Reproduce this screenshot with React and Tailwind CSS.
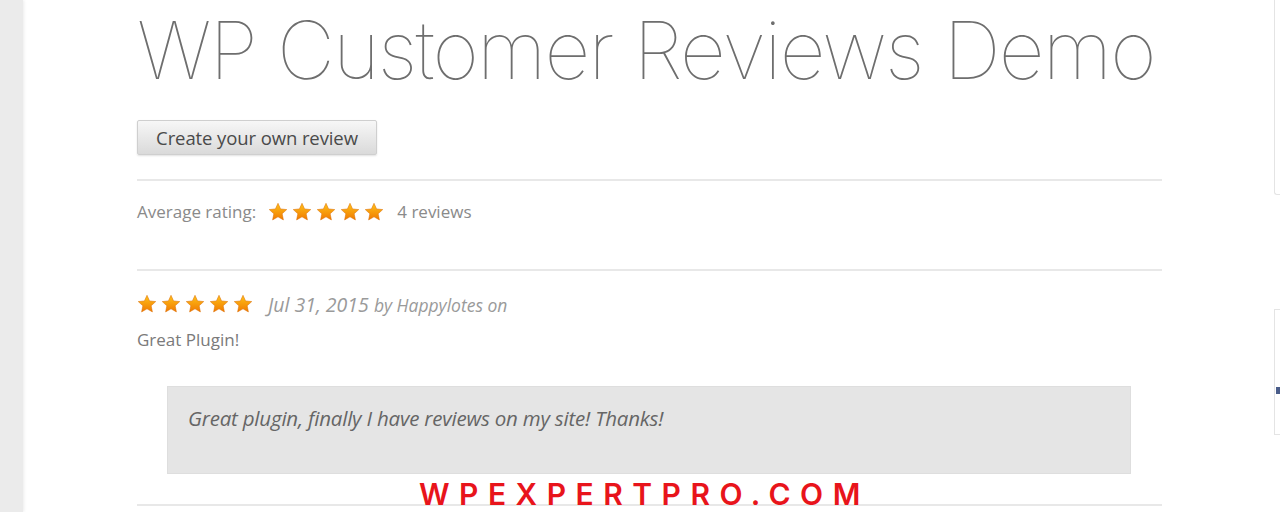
const Star = ({ size = 20 }) => (
  <svg width={size} height={size} viewBox="0 0 24 24">
    <defs>
      <linearGradient id="sg" x1="0" y1="0" x2="0" y2="1">
        <stop offset="0" stopColor="#ffc21a" />
        <stop offset="1" stopColor="#f07a00" />
      </linearGradient>
    </defs>
    <polygon
      points="12,1.5 15.1,8.3 22.5,9.1 17,14.1 18.5,21.5 12,17.8 5.5,21.5 7,14.1 1.5,9.1 8.9,8.3"
      fill="url(#sg)"
      stroke="#d96a00"
      strokeWidth="0.6"
    />
  </svg>
);

const Stars = () => (
  <div className="flex gap-[4px]">
    {[0, 1, 2, 3, 4].map((i) => (
      <Star key={i} />
    ))}
  </div>
);

const App = () => {
  return (
    <div className="relative flex h-[512px] w-[1280px] overflow-hidden bg-white font-['Open_Sans',sans-serif]">
      <div className="w-[23px] shrink-0 bg-[#ebebeb] shadow-[1px_0_3px_rgba(0,0,0,0.08)]" />
      <div className="w-[114px] shrink-0" />
      <div className="flex w-[1025px] flex-col">
        <h1 className="mt-0 h-[100px] whitespace-nowrap font-['Inter',sans-serif] text-[80px] font-thin leading-[100px] tracking-[-1.8px] text-[#6e6e6e]">
          WP Customer Reviews Demo
        </h1>
        <div className="mt-[20px]">
          <button className="h-[35px] w-[240px] rounded-[2px] border border-[#cfcfcf] bg-gradient-to-b from-[#f7f7f7] to-[#dadada] text-[18.5px] tracking-[-0.1px] text-[#4a4a4a] shadow-[0_1px_2px_rgba(0,0,0,0.12)]">
            Create your own review
          </button>
        </div>
        <div className="mt-[24px] h-[2px] bg-[#e8e8e8]" />
        <div className="mt-[18px] flex items-center text-[17px] text-[#8a8a8a]">
          <span className="mr-[12px]">Average rating:</span>
          <Stars />
          <span className="ml-[13px]">4 reviews</span>
        </div>
        <div className="mt-[44px] h-[2px] bg-[#e8e8e8]" />
        <div className="mt-[19px] flex items-center">
          <Stars />
          <span className="ml-[15px] text-[19.5px] italic text-[#9a9a9a]">
            Jul 31, 2015 <span className="text-[17.5px]">by Happylotes on</span>
          </span>
        </div>
        <div className="mt-[8px] text-[17px] text-[#7a7a7a]">Great Plugin!</div>
        <div className="ml-[30px] mt-[34px] h-[88px] w-[964px] border border-[#dedede] bg-[#e5e5e5] px-[20px] pt-[16px] text-[20.5px] italic tracking-[-0.2px] text-[#666]">
          Great plugin, finally I have reviews on my site! Thanks!
        </div>
        <div className="mt-[30px] h-[2px] bg-[#e8e8e8]" />
      </div>
      <div className="flex flex-1 flex-col">
        <div className="ml-auto mt-0 h-[195px] w-[6px] rounded-bl-[3px] border-b border-l border-[#e4e4e4]" />
        <div className="ml-auto mt-[114px] flex h-[126px] w-[6px] flex-col border-l border-t border-b border-[#e4e4e4]">
          <div className="ml-[1px] mt-[77px] h-[7px] w-[4px] bg-[#4a5d8a]" />
        </div>
      </div>
      <div className="absolute left-[419px] top-[476px] font-['Inter',sans-serif] text-[30px] font-semibold leading-[36px] tracking-[9.5px] text-[#e8141b]">
        WPEXPERTPRO.COM
      </div>
    </div>
  );
};

export default App;
